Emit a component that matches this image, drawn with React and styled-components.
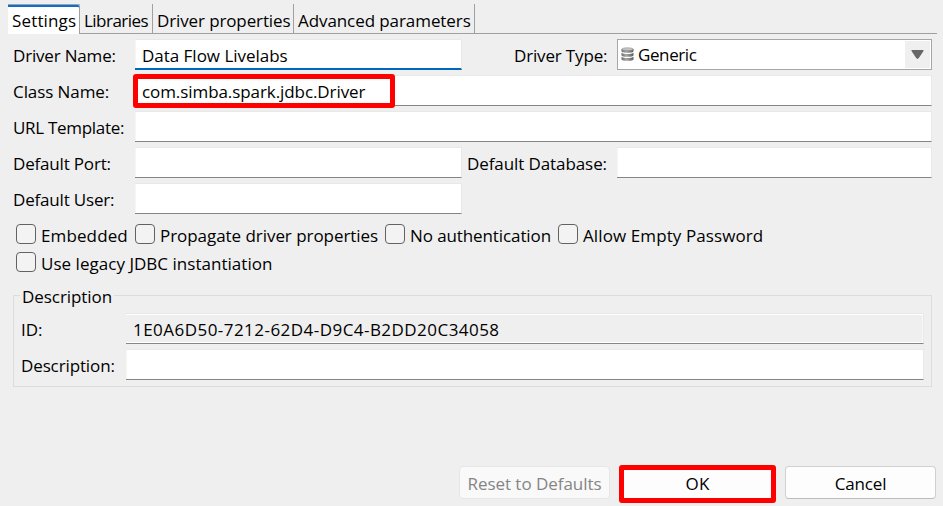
import React from 'react';
import styled, { createGlobalStyle } from 'styled-components';

const GlobalStyle = createGlobalStyle`
  *, *::before, *::after { box-sizing: border-box; }
  body {
    margin: 0;
    background: #efefef;
    color: #000;
    font: 17px/22px "Open Sans", "Noto Sans", sans-serif;
  }
`;

const Dialog = styled.main`
  width: 943px;
  height: 506px;
  display: flex;
  flex-direction: column;
  padding-top: 4px;
  overflow: hidden;
  white-space: nowrap;
`;

const Text = styled.span`
  letter-spacing: ${({ $track }) => $track || 0}px;
`;

const TabBar = styled.nav`
  display: flex;
  height: 30px;
  margin: 0 6px 0 8px;
`;

const Tab = styled.div`
  width: ${({ $width }) => $width}px;
  padding: 6px 0 0 4px;
  border-right: 1px solid #a0a0a0;
  border-bottom: 1px solid #a0a0a0;
`;

const ActiveTab = styled(Tab)`
  background: #fff;
  border-top: 1px solid #a0a0a0;
  border-bottom: 0;
  border-radius: 0 2px 0 0;
  box-shadow: inset 0 2px #0a6fd0;
  padding-top: 5px;
`;

const TabFill = styled.div`
  flex: 1;
  border-bottom: 1px solid #a0a0a0;
`;

const Form = styled.section`
  display: grid;
  grid-template-columns: 122px 327px 155px 315px;
  grid-auto-rows: 31px;
  row-gap: 5px;
  margin: 5px 0 0 13px;
`;

const Label = styled.label`
  padding: 6px 0 0 ${({ $indent }) => $indent || 0}px;
`;

const Field = styled.div`
  height: 31px;
  grid-column: ${({ $wide }) => ($wide ? '2 / -1' : 'auto')};
  display: flex;
  padding: 5px 0 0 7px;
  background: #fff;
  background-clip: padding-box;
  border: 1px solid #e8e8e8;
  border-left-width: 0;
  border-bottom: 1px solid #858585;
  box-shadow: inset 1px 0 #f6f6f6;
`;

const FocusedField = styled(Field)`
  border-bottom: 2px solid #0067c0;
`;

const ClassField = styled(Field)`
  position: relative;
`;

const Highlight = styled.div`
  position: absolute;
  inset: -2px auto -3px -2px;
  width: 262px;
  border: 5px solid #fe0000;
  border-radius: 3px;
`;

const Select = styled.div`
  height: 31px;
  display: flex;
  align-items: center;
  justify-content: space-between;
  padding: 1px 1px 1px 3px;
  background: #fff;
  border: 1px solid #a6a6a6;
`;

const Choice = styled.div`
  display: flex;
  align-items: center;
  gap: 4px;
`;

const SelectButton = styled.div`
  width: 25px;
  height: 27px;
  display: grid;
  place-items: center;
  background: #efefef;
`;

const CheckRow = styled.div`
  display: grid;
  grid-template-columns: 119px 250px 173px auto;
  height: 28px;
  margin-left: 16px;
`;

const Checks = styled.section`
  margin-top: 9px;
`;

const Check = styled.div`
  display: flex;
  gap: 5px;
`;

const Box = styled.span`
  flex: none;
  width: 20px;
  height: 20px;
  margin-top: 1px;
  border: 1px solid #626262;
  border-radius: 4px;
  background: #f3f3f3;
`;

const CheckText = styled(Text)`
  padding-top: 2px;
`;

const Group = styled.section`
  height: 100px;
  margin: 8px 11px 0 13px;
  display: flex;
  flex-direction: column;
`;

const GroupTitle = styled.div`
  display: flex;
  flex: none;
  height: 9px;
  align-items: flex-end;

  &::before,
  &::after {
    content: '';
    height: 1px;
    background: #dcdcdc;
  }
  &::before { width: 7px; }
  &::after { flex: 1; }
`;

const GroupName = styled(Text)`
  width: 94px;
  height: 9px;
  padding-left: 2px;
  line-height: 20px;
`;

const GroupBody = styled.div`
  flex: 1;
  display: grid;
  grid-template-columns: 105px 798px;
  grid-auto-rows: 31px;
  row-gap: 5px;
  padding: 17px 0 0 7px;
  border: solid #dcdcdc;
  border-width: 0 1px 1px;
`;

const ReadOnlyField = styled(Field)`
  background: #efefef;
  box-shadow: inset 0 1px #fff, inset 0 -1px #fff, inset -1px 0 #f8f8f8;
`;

const Footer = styled.footer`
  display: flex;
  justify-content: flex-end;
  align-items: flex-start;
  height: 41px;
  margin: auto 7px 0 0;
`;

const Button = styled.div`
  width: 151px;
  height: 33px;
  margin-top: 1px;
  padding-top: 6px;
  text-align: center;
  background: #fdfdfd;
  border: 1px solid #d0d0d0;
  border-bottom-color: #bcbcbc;
  border-radius: 4px;
`;

const DisabledButton = styled(Button)`
  color: #858585;
  background: #f9f9f9;
  border-color: #e6e6e6;
`;

const PrimaryButton = styled(Button)`
  width: 157px;
  height: 38px;
  margin: 0 9px;
  padding-top: 3px;
  border: 5px solid #fe0000;
  border-radius: 3px;
`;

const DatabaseIcon = () => (
  <svg width="13" height="15" viewBox="0 0 13 15">
    <defs>
      <linearGradient id="metal">
        <stop stopColor="#6e6e6e" />
        <stop offset=".4" stopColor="#a8a8a8" />
        <stop offset="1" stopColor="#5c5c5c" />
      </linearGradient>
    </defs>
    <path d="M.5 2v2.2c0 2 12 2 12 0V2zM.5 5.8v2.4c0 2.2 12 2.2 12 0V5.8c-2 1.6-10 1.6-12 0zM.5 9.8v2.4c0 2.2 12 2.2 12 0V9.8c-2 1.6-10 1.6-12 0z" fill="url(#metal)" />
    <ellipse cx="6.5" cy="2.2" rx="5.7" ry="1.4" fill="#c8c8c8" stroke="#858585" strokeWidth=".6" />
  </svg>
);

const ArrowIcon = () => (
  <svg width="13" height="9" viewBox="0 0 13 9">
    <path d="M1 0H12Q13 0 12.5 1L8 7.8Q6.5 10 5 7.8L.5 1Q0 0 1 0Z" fill="#666" />
  </svg>
);

const tabs = [
  ['Libraries', 73, -0.53],
  ['Driver properties', 141, -0.12],
  ['Advanced parameters', 181, -0.08],
];

const checks = [
  ['Embedded', 0.12],
  ['Propagate driver properties', -0.05],
  ['No authentication', -0.1],
  ['Allow Empty Password', 0.1],
];

const CheckItem = ({ label, track }) => (
  <Check>
    <Box />
    <CheckText $track={track}>{label}</CheckText>
  </Check>
);

export default function App() {
  return (
    <Dialog>
      <GlobalStyle />
      <TabBar>
        <ActiveTab $width={72}><Text $track={0.15}>Settings</Text></ActiveTab>
        {tabs.map(([name, width, track]) => (
          <Tab key={name} $width={width}><Text $track={track}>{name}</Text></Tab>
        ))}
        <TabFill />
      </TabBar>

      <Form>
        <Label><Text $track={-0.18}>Driver Name:</Text></Label>
        <FocusedField><Text $track={-0.02}>Data Flow Livelabs</Text></FocusedField>
        <Label $indent={52}><Text $track={-0.16}>Driver Type:</Text></Label>
        <Select>
          <Choice><DatabaseIcon /><Text $track={-0.4}>Generic</Text></Choice>
          <SelectButton><ArrowIcon /></SelectButton>
        </Select>

        <Label><Text $track={-0.08}>Class Name:</Text></Label>
        <ClassField $wide>
          <Text $track={-0.08}>com.simba.spark.jdbc.Driver</Text>
          <Highlight />
        </ClassField>

        <Label><Text $track={-0.3}>URL Template:</Text></Label>
        <Field $wide />

        <Label><Text $track={-0.18}>Default Port:</Text></Label>
        <Field />
        <Label $indent={5}><Text $track={-0.09}>Default Database:</Text></Label>
        <Field />

        <Label><Text $track={-0.18}>Default User:</Text></Label>
        <Field />
      </Form>

      <Checks>
        <CheckRow>
          {checks.map(([label, track]) => <CheckItem key={label} label={label} track={track} />)}
        </CheckRow>
        <CheckRow>
          <CheckItem label="Use legacy JDBC instantiation" track={0.03} />
        </CheckRow>
      </Checks>

      <Group>
        <GroupTitle><GroupName $track={-0.06}>Description</GroupName></GroupTitle>
        <GroupBody>
          <Label><Text>ID:</Text></Label>
          <ReadOnlyField><Text $track={0.46}>1E0A6D50-7212-62D4-D9C4-B2DD20C34058</Text></ReadOnlyField>
          <Label><Text $track={-0.12}>Description:</Text></Label>
          <Field />
        </GroupBody>
      </Group>

      <Footer>
        <DisabledButton><Text $track={-0.04}>Reset to Defaults</Text></DisabledButton>
        <PrimaryButton><Text $track={0.2}>OK</Text></PrimaryButton>
        <Button><Text $track={-0.15}>Cancel</Text></Button>
      </Footer>
    </Dialog>
  );
}
